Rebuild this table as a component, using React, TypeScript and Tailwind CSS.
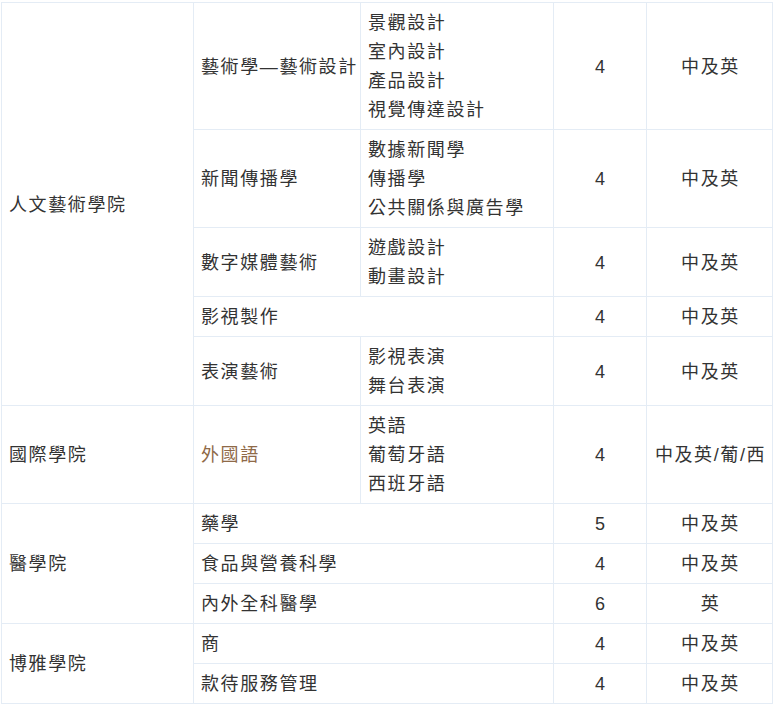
type Row = {
  school?: { name: string; span: number }
  major: string
  majorClass?: string
  subs?: string[]
  years: string
  lang: string
}

const rows: Row[] = [
  { school: { name: '人文藝術學院', span: 5 }, major: '藝術學—藝術設計', subs: ['景觀設計', '室內設計', '產品設計', '視覺傳達設計'], years: '4', lang: '中及英' },
  { major: '新聞傳播學', subs: ['數據新聞學', '傳播學', '公共關係與廣告學'], years: '4', lang: '中及英' },
  { major: '數字媒體藝術', subs: ['遊戲設計', '動畫設計'], years: '4', lang: '中及英' },
  { major: '影視製作', years: '4', lang: '中及英' },
  { major: '表演藝術', subs: ['影視表演', '舞台表演'], years: '4', lang: '中及英' },
  { school: { name: '國際學院', span: 1 }, major: '外國語', majorClass: 'text-[#8f6a48]', subs: ['英語', '葡萄牙語', '西班牙語'], years: '4', lang: '中及英/葡/西' },
  { school: { name: '醫學院', span: 3 }, major: '藥學', years: '5', lang: '中及英' },
  { major: '食品與營養科學', years: '4', lang: '中及英' },
  { major: '內外全科醫學', years: '6', lang: '英' },
  { school: { name: '博雅學院', span: 2 }, major: '商', years: '4', lang: '中及英' },
  { major: '款待服務管理', years: '4', lang: '中及英' },
]

const cell = 'border border-[#e4ecf5] pt-[6px] pb-[4px] align-middle whitespace-nowrap'

export default function App() {
  return (
    <div className="bg-white pl-px pt-[2px] min-h-[705px] font-['Liberation_Sans','Noto_Sans_CJK_TC',sans-serif] text-[18px] leading-[29px] tracking-[1.6px] text-[#333]">
      <table className="w-[771px] table-fixed border-collapse">
        <colgroup>
          <col className="w-[192px]" />
          <col className="w-[167px]" />
          <col className="w-[193px]" />
          <col className="w-[93px]" />
          <col className="w-[126px]" />
        </colgroup>
        <tbody>
          {rows.map((r, i) => (
            <tr key={i}>
              {r.school && (
                <td rowSpan={r.school.span} className={`${cell} px-[7px]`}>{r.school.name}</td>
              )}
              {r.subs ? (
                <>
                  <td className={`${cell} pl-[7px] pr-0 ${r.majorClass ?? ''}`}>{r.major}</td>
                  <td className={`${cell} px-[7px]`}>
                    {r.subs.map(s => <div key={s}>{s}</div>)}
                  </td>
                </>
              ) : (
                <td colSpan={2} className={`${cell} px-[7px]`}>{r.major}</td>
              )}
              <td className={`${cell} text-center tracking-normal`}>{r.years}</td>
              <td className={`${cell} text-center pl-[2px]`}>{r.lang}</td>
            </tr>
          ))}
        </tbody>
      </table>
    </div>
  )
}
